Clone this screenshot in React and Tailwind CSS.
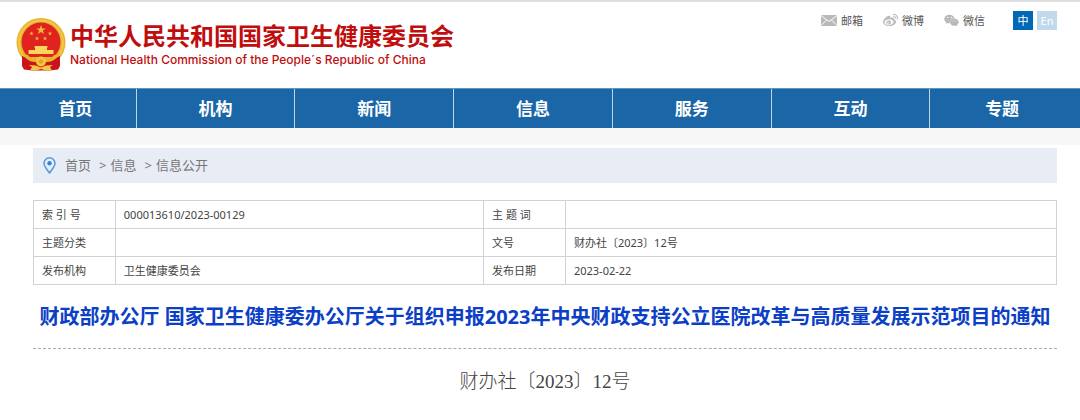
import { FaWeibo, FaWeixin } from 'react-icons/fa'

const navItems = ['首页', '机构', '新闻', '信息', '服务', '互动', '专题']

const infoRows = [
    ['索 引 号', '000013610/2023-00129', '主 题 词', ''],
    ['主题分类', '', '文号', '财办社〔2023〕12号'],
    ['发布机构', '卫生健康委员会', '发布日期', '2023-02-22'],
]

const star = (cx, cy, r) => {
    let points = []
    for (let i = 0; i < 10; i++) {
        const radius = i % 2 === 0 ? r : r * 0.4
        const angle = (Math.PI / 5) * i - Math.PI / 2
        points.push(`${cx + radius * Math.cos(angle)},${cy + radius * Math.sin(angle)}`)
    }
    return points.join(' ')
}

const Emblem = () => (
    <svg className="h-[53px] w-[50px] shrink-0" viewBox="0 0 50 53" aria-hidden="true">
        <circle cx="25" cy="24.500" r="24.500" fill="#e8b42f" />
        <circle cx="25" cy="24.500" r="22" fill="none" stroke="#f2c84b" strokeWidth="2" />
        <circle cx="25" cy="24" r="19.500" fill="#e0231f" />
        <polygon points={star(25, 12, 5)} fill="#f0b93a" />
        <polygon points={star(15.500, 15.500, 2.300)} fill="#f0b93a" />
        <polygon points={star(34, 15.500, 2.300)} fill="#f0b93a" />
        <polygon points={star(21, 20.500, 2.300)} fill="#f0b93a" />
        <polygon points={star(29, 20.500, 2.300)} fill="#f0b93a" />
        <path d="M19 28h12l1 1.500h-1v2.500h6.500v4h-25v-4H19v-2.500h-1z" fill="#f8d65a" />
        <path d="M6 38l7 3h24l7-3v10l-2 3.500-8 1H16l-8-1-2-3.500z" fill="#c8141a" />
        <path d="M6 35c5 2.500 10 3 14 3.500h10c4-.5 9-1 14-3.500-2 4-5 7-9 8.500l-4 .5H19l-4-.5c-4-1.500-7-4.500-9-8.500z" fill="#e8b42f" />
        <path d="M12 37h26l-2 2H14z" fill="#e0231f" />
        <circle cx="25" cy="43.500" r="5" fill="#f3c643" />
        <circle cx="25" cy="43.500" r="2.200" fill="#dfa52b" />
        <path d="M13 47l7 .5 5 2 5-2 7-.5-3 2 2 3.500h-6l-5-1.500-5 1.500h-6l2-3.500z" fill="#f3c643" />
    </svg>
)

const MailIcon = () => (
    <svg className="h-[11px] w-4" viewBox="0 0 16 11" aria-hidden="true">
        <rect width="16" height="11" fill="#b9b9b9" />
        <path d="M0 .5l8 6 8-6M0 10.500l5.500-5.500M16 10.500l-5.500-5.500" fill="none" stroke="#fff" />
    </svg>
)

const PinIcon = () => (
    <svg className="h-[17px] w-[13px]" viewBox="0 0 13 17" aria-hidden="true">
        <path d="M6.500 16C4 12.500 1 9.500 1 6.300a5.500 5.500 0 0 1 11 0C12 9.500 9 12.500 6.500 16z" fill="none" stroke="#4c9be0" strokeWidth="1.500" />
        <circle cx="6.500" cy="6.300" r="2.200" fill="#2f86d6" />
    </svg>
)

const Header = () => (
    <header className="flex h-[88px] items-start justify-between border-t-2 border-[#dedede] pl-4 pr-[23px]">
        <a href="#" className="flex gap-1 pt-4 text-[#c00d0e]">
            <Emblem />
            <div className="pt-1">
                <h1 className="whitespace-nowrap text-2xl font-bold leading-7">中华人民共和国国家卫生健康委员会</h1>
                <p className="whitespace-nowrap font-['Inter','Liberation_Sans',sans-serif] text-xs font-medium leading-5">
                    National Health Commission of the People´s Republic of China
                </p>
            </div>
        </a>
        <div className="flex items-center pt-[9px] text-[11px] leading-[18px] text-[#555]">
            <a href="#" className="mr-5 flex items-center gap-1"><MailIcon />邮箱</a>
            <a href="#" className="mr-5 flex items-center gap-1"><FaWeibo className="size-[15px] text-[#b9b9b9]" />微博</a>
            <a href="#" className="mr-7 flex items-center gap-1"><FaWeixin className="size-[15px] text-[#b9b9b9]" />微信</a>
            <button className="mr-1 h-[19px] w-5 bg-[#0068b7] text-white">中</button>
            <button className="h-[19px] w-5 bg-[#c2d9eb] text-white">En</button>
        </div>
    </header>
)

const App = () => {
    return (
        <div className="bg-white font-['Noto_Sans','Noto_Sans_CJK_SC',sans-serif]">
            <Header />

            <nav className="grid h-10 grid-cols-[122fr_159fr_159fr_159fr_159fr_159fr_144fr] border-t border-[#5f95c3] bg-[#1a66a7] pl-[15px] pr-[6px]">
                {navItems.map((item, key) => (
                    <a
                        key={key}
                        href="#"
                        className="flex items-center justify-center border-r border-[#bed3e6] text-[17px] font-bold text-white last:border-r-0"
                    >
                        {item}
                    </a>
                ))}
            </nav>
            <div className="h-[17px] bg-[#f7f7f7]"></div>

            <main className="pl-[33px] pr-[23px] pt-[3px]">
                {/* Breadcrumb */}
                <div className="flex h-[35px] items-center bg-[#e8ecf5] pl-[10px] text-[13px] text-[#777]">
                    <PinIcon />
                    <a href="#" className="ml-[9px] mr-2">首页</a>
                    <span className="mr-1">&gt;</span>
                    <a href="#" className="mr-2">信息</a>
                    <span className="mr-1">&gt;</span>
                    <a href="#">信息公开</a>
                </div>

                <table className="mt-[17px] w-full table-fixed border-collapse text-[11px] leading-4 text-[#444]">
                    <colgroup>
                        <col className="w-[8%]" />
                        <col className="w-[36%]" />
                        <col className="w-[8%]" />
                        <col className="w-[48%]" />
                    </colgroup>
                    <tbody>
                        {infoRows.map((row, key) => (
                            <tr key={key} className="h-7">
                                {row.map((cell, index) => index % 2 === 0 ? (
                                    <th key={index} scope="row" className="border border-[#d2d2d2] px-2 text-left font-normal">{cell}</th>
                                ) : (
                                    <td key={index} className="border border-[#d2d2d2] px-2">{cell}</td>
                                ))}
                            </tr>
                        ))}
                    </tbody>
                </table>

                <h2 className="border-b border-dashed border-[#aaa] pb-[17px] pt-[18px] text-center text-[20px] font-bold leading-7 text-[#0b40c6]">
                    财政部办公厅 国家卫生健康委办公厅关于组织申报2023年中央财政支持公立医院改革与高质量发展示范项目的通知
                </h2>
                <p className="pt-[19px] text-center font-['Liberation_Serif','Noto_Sans_CJK_SC',serif] text-[19px] font-light leading-7 text-[#444]">
                    财办社〔2023〕12号
                </p>
            </main>
        </div>
    )
}

export default App
